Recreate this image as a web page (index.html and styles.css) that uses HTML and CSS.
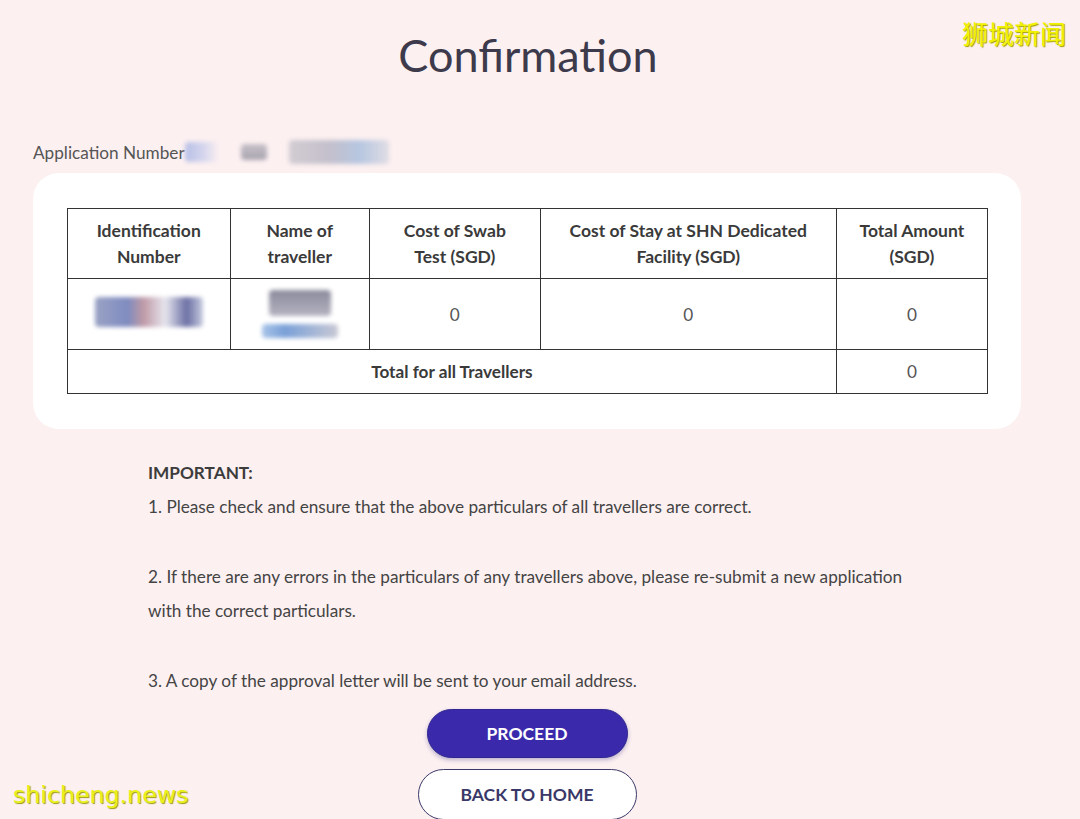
FILE: index.html
```html
<!DOCTYPE html>
<html lang="en">
<head>
  <meta charset="UTF-8" />
  <meta name="viewport" content="width=device-width, initial-scale=1.0"/>
  <title>Confirmation</title>
  <link rel="stylesheet" href="styles.css">
</head>
<body>
  <div class="watermark-top">狮城新闻</div>

  <h1 class="title">Confirmation</h1>

  <div class="app-number">
    <span>Application Number</span>
    <span class="smudge smudge-a"></span>
    <span class="smudge smudge-b"></span>
    <span class="smudge smudge-c"></span>
  </div>

  <div class="card">
    <table class="summary">
      <tr>
        <th class="col-id">Identification<br>Number</th>
        <th class="col-name">Name of<br>traveller</th>
        <th class="col-swab">Cost of Swab<br>Test (SGD)</th>
        <th class="col-stay">Cost of Stay at SHN Dedicated<br>Facility (SGD)</th>
        <th class="col-total">Total Amount<br>(SGD)</th>
      </tr>
      <tr class="data-row">
        <td><span class="smudge smudge-id"></span></td>
        <td>
          <span class="smudge smudge-name1"></span>
          <span class="smudge smudge-name2"></span>
        </td>
        <td>0</td>
        <td>0</td>
        <td>0</td>
      </tr>
      <tr class="total-row">
        <td colspan="4" class="total-label">Total for all Travellers</td>
        <td>0</td>
      </tr>
    </table>
  </div>

  <div class="notes">
    <p class="notes-head">IMPORTANT:</p>
    <p>1. Please check and ensure that the above particulars of all travellers are correct.</p>
    <p class="gap">2. If there are any errors in the particulars of any travellers above, please re-submit a new application<br>with the correct particulars.</p>
    <p class="gap">3. A copy of the approval letter will be sent to your email address.</p>
  </div>

  <div class="actions">
    <button class="btn btn-primary">PROCEED</button>
    <button class="btn btn-outline">BACK TO HOME</button>
  </div>

  <div class="watermark-bottom">shicheng.news</div>
</body>
</html>
```

FILE: styles.css
```css
body {
  margin: 0;
  background-color: #fcf0f1;
  font-family: 'Lato', 'Noto Sans', sans-serif;
  color: #444;
  width: 1080px;
  height: 819px;
  overflow: hidden;
  position: relative;
}

.title {
  width: 1056px;
  margin: 0;
  padding-top: 27px;
  text-align: center;
  font-size: 45px;
  font-weight: 400;
  color: #3d3a4c;
  line-height: 56px;
}

.app-number {
  display: flex;
  align-items: center;
  margin: 57px 0 0 33px;
  height: 24px;
  font-size: 17.2px;
  color: #555;
}

.smudge {
  display: inline-block;
  filter: blur(2px);
  border-radius: 4px;
}

.smudge-a {
  width: 34px;
  height: 20px;
  background: linear-gradient(90deg, #b8c0e6, #d8d8ee 60%, transparent);
}

.smudge-b {
  width: 26px;
  height: 16px;
  margin-left: 22px;
  background: linear-gradient(180deg, #c6c0c8, #a8a4b0);
}

.smudge-c {
  width: 100px;
  height: 24px;
  margin-left: 22px;
  background: linear-gradient(90deg, #d2ccd2, #c4c0cc 40%, #b6c6e0 70%, #e0dde4);
}

.card {
  width: 921px;
  margin: 9px 0 0 33px;
  padding: 35px 33px 35px 34px;
  background: #fff;
  border-radius: 26px;
}

.summary {
  width: 921px;
  border-collapse: collapse;
  font-size: 17.2px;
  color: #333;
}

.summary th,
.summary td {
  border: 1.5px solid #333;
  text-align: center;
  padding: 0;
}

.summary th {
  height: 69px;
  font-weight: 700;
  line-height: 26px;
  color: #3a3a3a;
  font-size: 17.5px;
}

.col-id { width: 162px; }
.col-name { width: 139px; }
.col-swab { width: 171px; }
.col-stay { width: 297px; }
.col-total { width: 151px; }

.data-row td {
  height: 70px;
  color: #555;
}

.total-row td {
  height: 43px;
  color: #555;
}

.summary .total-label {
  font-weight: 700;
  color: #3a3a3a;
}

.smudge-id {
  width: 108px;
  height: 30px;
  background: linear-gradient(90deg, #9aa2c4, #7f8cc0 30%, #c09aa6 45%, #e6e6ee 65%, #6c70a4 85%, #c8cce0);
}

.smudge-name1 {
  display: block;
  width: 62px;
  height: 26px;
  margin: 0 auto 8px;
  background: linear-gradient(180deg, #8a8a9c, #b6b4c2);
}

.smudge-name2 {
  display: block;
  width: 76px;
  height: 14px;
  margin: 0 auto;
  background: linear-gradient(90deg, #a8c4e8, #7aa0d8 30%, #c8c8d4);
}

.notes {
  margin: 27px 0 0 148px;
  font-size: 17.2px;
  line-height: 34px;
  color: #444;
}

.notes p {
  margin: 0;
}

.notes .notes-head {
  font-weight: 700;
  color: #3c3c3c;
}

.notes .gap {
  margin-top: 36px;
}

.actions {
  width: 1054px;
  display: flex;
  flex-direction: column;
  align-items: center;
  gap: 11px;
  margin-top: 11px;
}

.btn {
  font-family: 'Lato', sans-serif;
  font-weight: 700;
  font-size: 17.5px;
  border-radius: 26px;
  cursor: pointer;
}

.btn-primary {
  width: 201px;
  height: 49px;
  background-color: #3a2aab;
  color: #fff;
  border: 1px solid #2f2690;
  box-shadow: 0 2px 4px rgba(40, 30, 120, 0.3);
}

.btn-outline {
  width: 219px;
  height: 51px;
  background-color: #fff;
  color: #3a3868;
  border: 1.5px solid #3a3868;
}

.watermark-top {
  position: absolute;
  top: 14px;
  right: 14px;
  font-family: 'Noto Sans CJK SC', sans-serif;
  font-size: 26px;
  color: #f2f200;
  text-shadow: 1px 1px 1px #a0a000;
}

.watermark-bottom {
  position: absolute;
  left: 13px;
  top: 781px;
  font-family: 'DejaVu Sans', sans-serif;
  font-size: 23.7px;
  color: #eaf01a;
  text-shadow: 1px 1px 1px #9a9a10;
}
```
